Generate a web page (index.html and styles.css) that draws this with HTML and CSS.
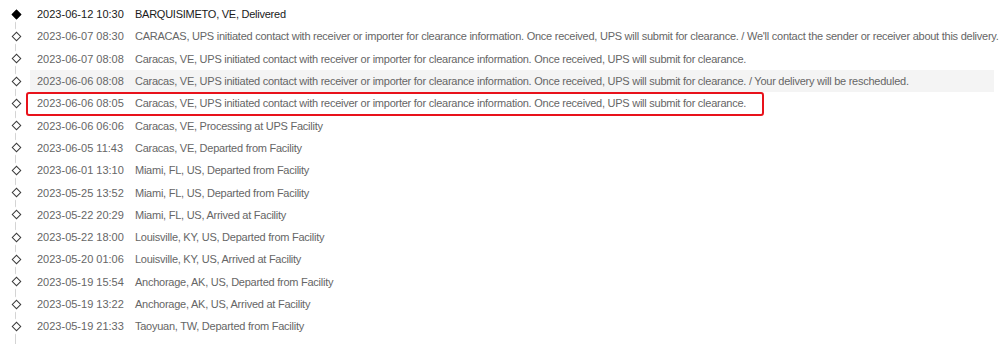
FILE: index.html
```html
<!DOCTYPE html>
<html>
<head>
<meta charset="utf-8">
<link rel="stylesheet" href="styles.css">
</head>
<body>
<ul class="timeline">
  <li class="row current"><span class="dot"></span><div class="content"><span class="date">2023-06-12 10:30</span><span class="desc">BARQUISIMETO, VE, Delivered</span></div></li>
  <li class="row"><span class="dot"></span><div class="content"><span class="date">2023-06-07 08:30</span><span class="desc">CARACAS, UPS initiated contact with receiver or importer for clearance information. Once received, UPS will submit for clearance. / We'll contact the sender or receiver about this delivery.</span></div></li>
  <li class="row"><span class="dot"></span><div class="content"><span class="date">2023-06-07 08:08</span><span class="desc">Caracas, VE, UPS initiated contact with receiver or importer for clearance information. Once received, UPS will submit for clearance.</span></div></li>
  <li class="row"><span class="dot"></span><div class="content hover"><span class="date">2023-06-06 08:08</span><span class="desc">Caracas, VE, UPS initiated contact with receiver or importer for clearance information. Once received, UPS will submit for clearance. / Your delivery will be rescheduled.</span></div></li>
  <li class="row"><span class="dot"></span><div class="content marked"><span class="date">2023-06-06 08:05</span><span class="desc">Caracas, VE, UPS initiated contact with receiver or importer for clearance information. Once received, UPS will submit for clearance.</span></div></li>
  <li class="row"><span class="dot"></span><div class="content"><span class="date">2023-06-06 06:06</span><span class="desc">Caracas, VE, Processing at UPS Facility</span></div></li>
  <li class="row"><span class="dot"></span><div class="content"><span class="date">2023-06-05 11:43</span><span class="desc">Caracas, VE, Departed from Facility</span></div></li>
  <li class="row"><span class="dot"></span><div class="content"><span class="date">2023-06-01 13:10</span><span class="desc">Miami, FL, US, Departed from Facility</span></div></li>
  <li class="row"><span class="dot"></span><div class="content"><span class="date">2023-05-25 13:52</span><span class="desc">Miami, FL, US, Departed from Facility</span></div></li>
  <li class="row"><span class="dot"></span><div class="content"><span class="date">2023-05-22 20:29</span><span class="desc">Miami, FL, US, Arrived at Facility</span></div></li>
  <li class="row"><span class="dot"></span><div class="content"><span class="date">2023-05-22 18:00</span><span class="desc">Louisville, KY, US, Departed from Facility</span></div></li>
  <li class="row"><span class="dot"></span><div class="content"><span class="date">2023-05-20 01:06</span><span class="desc">Louisville, KY, US, Arrived at Facility</span></div></li>
  <li class="row"><span class="dot"></span><div class="content"><span class="date">2023-05-19 15:54</span><span class="desc">Anchorage, AK, US, Departed from Facility</span></div></li>
  <li class="row"><span class="dot"></span><div class="content"><span class="date">2023-05-19 13:22</span><span class="desc">Anchorage, AK, US, Arrived at Facility</span></div></li>
  <li class="row"><span class="dot"></span><div class="content"><span class="date">2023-05-19 21:33</span><span class="desc">Taoyuan, TW, Departed from Facility</span></div></li>
</ul>
</body>
</html>
```
FILE: styles.css
```css
html, body {
  margin: 0;
  padding: 0;
  background: #fff;
  height: 344px;
  overflow: hidden;
}
body {
  font-family: "Liberation Sans", Arial, sans-serif;
  font-size: 11px;
  color: #666;
}
.timeline {
  list-style: none;
  margin: 0;
  padding: 3px 6px 0 0;
  height: 344px;
  box-sizing: border-box;
  position: relative;
}
.timeline::before {
  content: "";
  position: absolute;
  left: 15px;
  top: 20px;
  bottom: 0;
  width: 1px;
  background: #d4d4d4;
}
.row {
  display: flex;
  align-items: center;
  height: 22.3px;
  position: relative;
}
.dot {
  width: 30px;
  flex: 0 0 30px;
  display: flex;
  justify-content: center;
  align-items: center;
  height: 100%;
  position: relative;
}
.dot::before {
  content: "";
  display: block;
  width: 5px;
  height: 5px;
  border: 1.3px solid #3a3a3a;
  background: #fff;
  transform: rotate(45deg);
  box-shadow: 0 0 0 2.5px #fff;
  margin-left: 2px;
}
.current .dot::before {
  background: #000;
  border-color: #000;
}
.content {
  flex: 1;
  display: flex;
  align-items: center;
  height: 100%;
  padding-left: 7px;
  white-space: nowrap;
  overflow: visible;
  position: relative;
}
.content.hover {
  background: #f4f4f4;
}
.content.marked::after {
  content: "";
  position: absolute;
  left: -4px;
  top: 0;
  width: 734px;
  height: 20px;
  border: 2px solid #e8121b;
  border-radius: 3px;
}
.date {
  width: 98px;
  flex: 0 0 98px;
}
.desc {
  letter-spacing: -0.25px;
}
.current .content {
  color: #1a1a1a;
}
```
